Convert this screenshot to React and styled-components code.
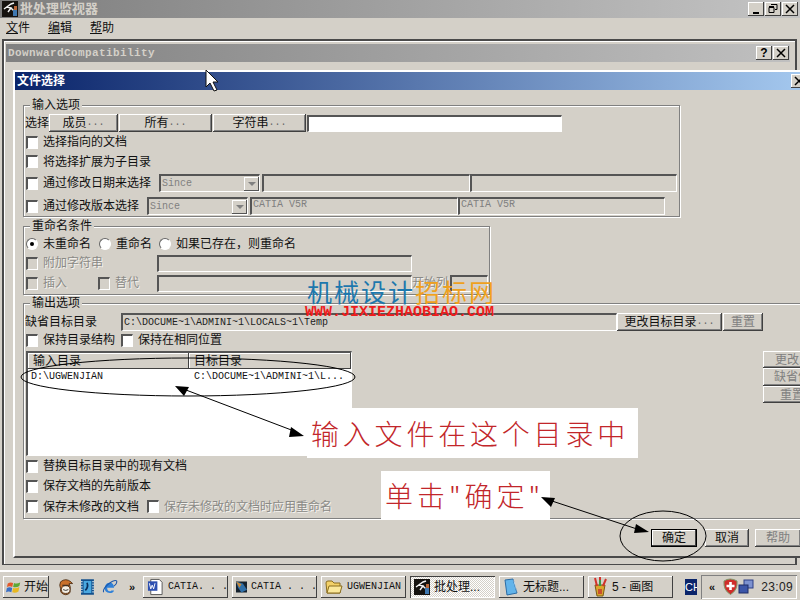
import styled, { createGlobalStyle } from "styled-components";

const face = "#d4d0c8";
const cjk = `"Liberation Sans", "Noto Sans CJK SC", sans-serif`;
const mono = `"Liberation Mono", "Noto Sans CJK SC", monospace`;

const GlobalStyle = createGlobalStyle`
  html, body {
    margin: 0;
    overflow: hidden;
    background: ${face};
  }
  * {
    box-sizing: border-box;
  }
`;

const Screen = styled.div`
  position: relative;
  display: flex;
  flex-direction: column;
  width: 800px;
  height: 600px;
  overflow: hidden;
  background: ${face};
  color: #111;
  font: 12px/14px ${cjk};
`;

const MainTitle = styled.div`
  display: flex;
  align-items: center;
  flex: none;
  height: 18px;
  padding: 0 2px 0 2px;
  background: linear-gradient(90deg, #7e7e7e, #c4c4c4);
`;

const MainTitleText = styled.span`
  margin-left: 2px;
  color: ${face};
  font-size: 13px;
  font-weight: 700;
  flex: 1;
`;

const WinButton = styled.div`
  display: flex;
  align-items: center;
  justify-content: center;
  flex: none;
  width: 16px;
  height: 14px;
  margin-left: 1px;
  background: ${face};
  box-shadow: inset -1px -1px #404040, inset 1px 1px #fff;
  color: #000;
  font: 700 12px/14px "Liberation Sans", sans-serif;
  letter-spacing: 0;
`;

const MenuBar = styled.div`
  display: flex;
  flex: none;
  height: 20px;
  padding: 3px 0 0 6px;
`;

const MenuItem = styled.div`
  width: 42px;
  u {
    text-underline-offset: 1px;
  }
`;

const InnerWindow = styled.div`
  flex: none;
  width: 795px;
  height: 526px;
  margin: 1px 0 0 2px;
  padding: 3px 0 0 2px;
  border: 2px solid #4a4a4a;
  border-bottom-width: 1px;
  box-shadow: inset 1px 1px #fff;
`;

const InnerTitle = styled.div`
  display: flex;
  align-items: center;
  width: 784px;
  height: 18px;
  padding: 0 1px 0 2px;
  background: linear-gradient(90deg, #808080, #c0c0c0);
  color: ${face};
  font: 700 11px/14px ${mono};
  letter-spacing: 0.4px;
`;

const InnerTitleText = styled.span`
  flex: 1;
`;

const Dialog = styled.div`
  width: 800px;
  height: 488px;
  margin: 8px 0 0 7px;
  border: 2px solid #fff;
  border-right: 0;
  border-bottom: 2px solid #4a4a4a;
  background: ${face};
`;

const DialogTitle = styled.div`
  display: flex;
  align-items: center;
  justify-content: space-between;
  height: 18px;
  padding: 0 6px 0 2px;
  background: linear-gradient(90deg, #0a246a, #a6caf0);
  color: #fff;
  font-size: 12px;
  font-weight: 700;
`;

const DialogBody = styled.div`
  padding: 15px 0 0 8px;
`;

const Group = styled.div`
  position: relative;
  width: ${(p) => p.$w}px;
  height: ${(p) => p.$h}px;
  margin-bottom: ${(p) => p.$mb || 0}px;
  padding: ${(p) => p.$pt}px 0 0 2px;
  border: 1px solid #808080;
  box-shadow: 1px 1px #fff, inset 1px 1px #fff;
`;

const Legend = styled.div`
  position: absolute;
  top: -8px;
  left: ${(p) => p.$left}px;
  padding: 0 2px;
  background: ${face};
`;

const Row = styled.div`
  display: flex;
  align-items: center;
  height: ${(p) => p.$h}px;
`;

const Label = styled.span`
  flex: none;
  width: ${(p) => (p.$w ? `${p.$w}px` : "auto")};
  margin-left: ${(p) => p.$ml || 0}px;
  white-space: nowrap;
  color: ${(p) => (p.$off ? "#8a8a86" : "#111")};
  text-shadow: ${(p) => (p.$off ? "1px 1px #f4f2ee" : "none")};
`;

const Box = styled.span`
  flex: none;
  width: 12px;
  height: 13px;
  margin: ${(p) => p.$m || "0 5px 0 0"};
  border-style: solid;
  border-width: 2px 1px 1px 2px;
  border-color: #555 #fff #fff #555;
  background: ${(p) => (p.$off ? face : "#fff")};
`;

const Radio = styled.span`
  flex: none;
  display: flex;
  align-items: center;
  justify-content: center;
  width: 12px;
  height: 12px;
  margin-right: 5px;
  border-radius: 50%;
  border: 1px solid;
  border-color: #666 #fff #fff #666;
  background: #fff;
  &::after {
    content: "";
    display: ${(p) => (p.$on ? "block" : "none")};
    width: 4px;
    height: 4px;
    border-radius: 50%;
    background: #000;
  }
`;

const Field = styled.div`
  flex: none;
  display: flex;
  align-items: center;
  justify-content: space-between;
  width: ${(p) => p.$w}px;
  height: ${(p) => p.$h || 18}px;
  margin-left: ${(p) => p.$ml || 0}px;
  padding: 0 0 ${(p) => p.$raise || 0}px 1px;
  border-style: solid;
  border-width: 2px 1px 1px 2px;
  border-color: #555 #fff #fff #555;
  background: ${(p) => (p.$white ? "#fff" : face)};
  color: ${(p) => (p.$dark ? "#222" : "#808080")};
  font: 10px/12px ${mono};
  white-space: nowrap;
  overflow: hidden;
`;

const ComboArrow = styled.span`
  display: flex;
  align-items: center;
  justify-content: center;
  width: 15px;
  height: 14px;
  background: ${face};
  box-shadow: inset -1px -1px #555, inset 1px 1px #fff;
  &::after {
    content: "";
    border: 4px solid transparent;
    border-top: 4px solid #808080;
    border-bottom: 0;
  }
`;

const Button = styled.div`
  flex: none;
  display: flex;
  align-items: center;
  justify-content: center;
  width: ${(p) => p.$w}px;
  height: ${(p) => p.$h || 18}px;
  margin-left: ${(p) => p.$ml || 0}px;
  background: ${face};
  box-shadow: inset -1px -1px #404040, inset 1px 1px #fff, inset -2px -2px #808080;
  color: ${(p) => (p.$off ? "#808080" : "#111")};
  white-space: nowrap;
  overflow: hidden;
  ${(p) => p.$focus && "outline: 1px solid #000; outline-offset: -1px; box-shadow: inset -2px -2px #404040, inset 2px 2px #fff;"}
`;

const Dots = styled.span`
  color: #666;
  font: 10px/12px ${mono};
`;

const TableRow = styled.div`
  display: flex;
  margin-top: 2px;
  height: 105px;
`;

const Table = styled.div`
  flex: none;
  width: 326px;
  height: 105px;
  border-style: solid;
  border-width: 2px 1px 1px 2px;
  border-color: #555 #fff #fff #555;
  background: #fff;
  font: 10px/12px ${mono};
`;

const TableHead = styled.div`
  display: flex;
  height: 16px;
  font: 12px/16px ${cjk};
`;

const HeadCell = styled.div`
  width: ${(p) => p.$w}px;
  padding-left: 5px;
  background: ${face};
  box-shadow: inset -1px -1px #404040, inset 1px 1px #fff;
`;

const TableLine = styled.div`
  display: flex;
  padding-top: 2px;
  height: 16px;
`;

const TableCell = styled.div`
  width: ${(p) => p.$w}px;
  padding-left: 3px;
  white-space: nowrap;
`;

const SideButtons = styled.div`
  display: flex;
  flex-direction: column;
  margin-left: 411px;
`;

const Footer = styled.div`
  display: flex;
  margin-top: 10px;
  padding-left: 628px;
`;

const TaskBar = styled.div`
  display: flex;
  align-items: center;
  flex: none;
  height: 31px;
  margin-top: 5px;
  padding-left: 3px;
  border-top: 2px solid #fff;
  background: ${face};
`;

const StartButton = styled.div`
  display: flex;
  align-items: center;
  gap: 2px;
  flex: none;
  width: 46px;
  height: 22px;
  padding-left: 3px;
  background: ${face};
  box-shadow: inset -1px -1px #404040, inset 1px 1px #fff;
  font-size: 12px;
`;

const QuickLaunch = styled.div`
  display: flex;
  align-items: center;
  flex: none;
  width: 94px;
  padding-left: 9px;
  gap: 8px;
`;

const Chevrons = styled.span`
  margin: 0 8px 0 3px;
  font: 700 11px/14px "Liberation Sans", sans-serif;
`;

const TaskList = styled.div`
  display: flex;
  gap: 4px;
  flex: none;
`;

const Task = styled.div`
  display: flex;
  align-items: center;
  gap: 4px;
  flex: none;
  width: 85px;
  height: 22px;
  padding-left: 4px;
  white-space: nowrap;
  overflow: hidden;
  font: 12px/14px ${cjk};
  background: ${(p) =>
    p.$pressed
      ? `repeating-conic-gradient(#fff 0 25%, ${face} 0 50%) 0 0 / 2px 2px`
      : face};
  box-shadow: ${(p) =>
    p.$pressed
      ? "inset 1px 1px #404040, inset -1px -1px #fff"
      : "inset -1px -1px #404040, inset 1px 1px #fff"};
`;

const TaskMono = styled.span`
  font: 10px/12px ${mono};
`;

const LangBox = styled.div`
  flex: none;
  width: 12px;
  height: 16px;
  margin-left: 12px;
  overflow: hidden;
  background: #0a246a;
  color: #fff;
  font: 11px/16px "Liberation Sans", sans-serif;
`;

const Tray = styled.div`
  display: flex;
  align-items: center;
  flex: none;
  width: 96px;
  height: 24px;
  margin-left: 4px;
  padding-left: 5px;
  box-shadow: inset 1px 1px #808080, inset -1px -1px #fff;
`;

const Clock = styled.span`
  margin-left: 7px;
  color: #222;
  letter-spacing: 0.4px;
`;

const Overlay = styled.svg`
  position: absolute;
  left: 0;
  top: 0;
  z-index: 5;
  pointer-events: none;
`;

const Watermark = styled.div`
  position: absolute;
  left: 307px;
  top: 276px;
  z-index: 3;
  font: 400 25px/30px "Noto Sans CJK SC", sans-serif;
  letter-spacing: 2px;
  white-space: nowrap;
  color: #1d78ad;
  span {
    color: #efa11e;
  }
`;

const WatermarkUrl = styled.div`
  position: absolute;
  left: 305px;
  top: 304px;
  z-index: 3;
  color: #ee1c1c;
  font: 700 15px/17px ${mono};
`;

const Note = styled.div`
  position: absolute;
  left: ${(p) => p.$x}px;
  top: ${(p) => p.$y}px;
  z-index: 4;
  width: ${(p) => p.$w}px;
  height: ${(p) => p.$h}px;
  padding-left: 4px;
  background: #fff;
  color: #c2262a;
  font: 300 28px/${(p) => p.$h}px "Noto Sans CJK SC", sans-serif;
  letter-spacing: ${(p) => p.$ls}px;
  white-space: nowrap;
`;

const AppIcon = ({ size = 16 }) => (
  <svg width={size} height={size} viewBox="0 0 16 16">
    <rect width="16" height="16" fill="#15120f" />
    <path d="M2 8 L9 3 L12 2 M5 6 L9 7 L6 11 M9 7 L13 11" stroke="#f4f4f4" strokeWidth="1.4" fill="none" />
    <path d="M11 9 h4 v6 h-4z" fill="#3f78b0" />
    <path d="M12 5 h3 v4 h-3z" fill="#b8673a" />
  </svg>
);

const FlagIcon = () => (
  <svg width="16" height="16" viewBox="0 0 18 16">
    <path d="M2 4 Q5 2 8 3.5 L7 8 Q4 6.5 1 8z" fill="#e2582a" />
    <path d="M9 3.5 Q12 5 16 3 L15 7 Q12 9 8 8z" fill="#5ea834" />
    <path d="M1 9 Q4 7.5 7 9 L6 14 Q3 12 0 14z" fill="#3a6fc4" />
    <path d="M8 9 Q11 10 15 8 L14 13 Q11 15 7 14z" fill="#e8b820" />
  </svg>
);

const PenguinIcon = () => (
  <svg width="18" height="20" viewBox="0 0 18 20">
    <path d="M3 4 Q9 -1 15 4 L17 6 L13 6 Q15 10 14 14 Q15 18 9 19 Q2 18 3 12 Q1 8 3 4z" fill="#c9702a" stroke="#4a2b10" />
    <ellipse cx="9" cy="13" rx="5" ry="4.5" fill="#f5efe4" stroke="#4a2b10" />
    <path d="M5 8 h8 M6 13 q3 2 6 0" stroke="#222" fill="none" />
  </svg>
);

const FilmIcon = () => (
  <svg width="15" height="18" viewBox="0 0 15 18">
    <rect width="15" height="18" fill="#12508c" />
    <rect x="3" y="2" width="9" height="14" fill="#4aa8e0" />
    <path d="M1 2v14M14 2v14" stroke="#e8f4fc" strokeDasharray="1.5 1.5" strokeWidth="1.5" />
    <path d="M5 13 Q9 9 7 4" stroke="#0a2f5c" strokeWidth="2" fill="none" />
  </svg>
);

const IeIcon = () => (
  <svg width="18" height="18" viewBox="0 0 18 18">
    <path d="M4 10 h10 Q14 4 9 4 Q4 4 3 10 Q3 16 9 16 Q13 16 14 13 h-3 Q10 14 9 14 Q6 14 6 10z" fill="#2f80d8" />
    <path d="M2 15 Q0 12 8 5 Q15 0 17 2 Q18 5 14 8" stroke="#1a54a8" strokeWidth="1.2" fill="none" />
  </svg>
);

const WordIcon = () => (
  <svg width="18" height="18" viewBox="0 0 18 18">
    <path d="M4 1 h9 l3 3 v13 h-12z" fill="#fff" stroke="#555" />
    <rect x="1" y="3" width="10" height="10" fill="#2d4fb0" />
    <path d="M2.5 5 l1.5 6 1.5-4 1.5 4 1.5-6" stroke="#fff" fill="none" />
  </svg>
);

const CatiaIcon = () => (
  <svg width="16" height="16" viewBox="0 0 16 16">
    <rect width="16" height="16" fill="#16222e" />
    <path d="M0 0 L10 3 L16 12 L8 16 L3 9z" fill="#2f6fa8" />
    <path d="M0 0 L8 4 L5 9z" fill="#c98a3a" />
  </svg>
);

const FolderIcon = () => (
  <svg width="18" height="16" viewBox="0 0 18 16">
    <path d="M1 4 Q1 2 3 2 H7 L9 4 H15 V14 H2z" fill="#f3d168" stroke="#8a6d1f" />
    <path d="M2 14 L4 7 H17 L15 14z" fill="#fbe89a" stroke="#8a6d1f" />
  </svg>
);

const NoteIcon = () => (
  <svg width="16" height="18" viewBox="0 0 16 18">
    <path d="M2 2 L10 1 L14 15 L4 17z" fill="#63b4ea" stroke="#2b6ca5" />
    <path d="M10 1 L14 15 L12 5z" fill="#cfe7f8" />
  </svg>
);

const PaintIcon = () => (
  <svg width="16" height="20" viewBox="0 0 16 20">
    <path d="M3 8 h10 l-2 11 h-6z" fill="#d9a62c" stroke="#7a5a14" />
    <path d="M5 9 L3 1 M8 9 V0 M11 9 L14 2" stroke="#d0342c" strokeWidth="2" />
    <path d="M8 9 V3" stroke="#3c9a44" strokeWidth="2" />
    <path d="M6 12 h4 v5 h-4z" fill="#c9502c" />
  </svg>
);

const ShieldIcon = () => (
  <svg width="15" height="17" viewBox="0 0 15 17">
    <path d="M1 3 Q7 -1 14 3 Q15 12 7.5 16.5 Q0 12 1 3z" fill="#cf2d2a" stroke="#7d9a6a" />
    <path d="M7.5 4 v8 M3.5 8 h8" stroke="#fff" strokeWidth="2.6" />
  </svg>
);

const NetworkIcon = () => (
  <svg width="16" height="16" viewBox="0 0 16 16">
    <rect x="6" y="1" width="9" height="8" fill="#7d92d0" stroke="#2c3f86" />
    <rect x="1" y="6" width="9" height="8" fill="#3c56a8" stroke="#1e2c66" />
  </svg>
);

const CrossIcon = () => (
  <svg width="10" height="10" stroke="#000" strokeWidth="1.5">
    <path d="M1 1l8 8M9 1l-8 8" />
  </svg>
);

const CheckItem = ({ text, off, m }) => (
  <>
    <Box $off={off} $m={m} />
    <Label $off={off}>{text}</Label>
  </>
);

export default function App() {
  return (
    <Screen>
      <GlobalStyle />
      <MainTitle>
        <AppIcon />
        <MainTitleText>批处理监视器</MainTitleText>
        <WinButton>
          <svg width="10" height="10"><path d="M2 8h6v2H2z" fill="#000" /></svg>
        </WinButton>
        <WinButton>
          <svg width="10" height="10" fill="none" stroke="#000"><path d="M3 .5h6v5h-2M1 3.5h5v5H1zM1 2.5h5" /></svg>
        </WinButton>
        <WinButton><CrossIcon /></WinButton>
      </MainTitle>
      <MenuBar>
        <MenuItem><u>文</u>件</MenuItem>
        <MenuItem><u>编</u>辑</MenuItem>
        <MenuItem><u>帮</u>助</MenuItem>
      </MenuBar>

      <InnerWindow>
        <InnerTitle>
          <InnerTitleText>DownwardCompatibility</InnerTitleText>
          <WinButton>?</WinButton>
          <WinButton><CrossIcon /></WinButton>
        </InnerTitle>

        <Dialog>
          <DialogTitle>
            文件选择
            <WinButton><CrossIcon /></WinButton>
          </DialogTitle>
          <DialogBody>
            <Group $w={657} $h={112} $pt={8} $mb={9}>
              <Legend $left={6}>输入选项</Legend>
              <Row $h={18}>
                <Label $w={24} $ml={-1}>选择</Label>
                <Button $w={69}>成员<Dots>...</Dots></Button>
                <Button $w={93} $ml={1}>所有<Dots>...</Dots></Button>
                <Button $w={93} $ml={1}>字符串<Dots>...</Dots></Button>
                <Field $w={255} $ml={1} $h={17} $white />
              </Row>
              <Row $h={20}><CheckItem text="选择指向的文档" /></Row>
              <Row $h={19}><CheckItem text="将选择扩展为子目录" /></Row>
              <Row $h={24}>
                <Box />
                <Label $w={116}>通过修改日期来选择</Label>
                <Field $w={101}>Since<ComboArrow /></Field>
                <Field $w={208} $ml={2} />
                <Field $w={207} />
              </Row>
              <Row $h={22}>
                <Box />
                <Label $w={104}>通过修改版本选择</Label>
                <Field $w={101}>Since<ComboArrow /></Field>
                <Field $w={208} $ml={2} $raise={3}>CATIA V5R</Field>
                <Field $w={207} $raise={3}>CATIA V5R</Field>
              </Row>
            </Group>

            <Group $w={467} $h={69} $pt={8} $mb={8}>
              <Legend $left={6}>重命名条件</Legend>
              <Row $h={18}>
                <Radio $on />
                <Label $w={56}>未重命名</Label>
                <Radio />
                <Label $w={43}>重命名</Label>
                <Radio />
                <Label>如果已存在，则重命名</Label>
              </Row>
              <Row $h={20}>
                <Box $off />
                <Label $w={114} $off>附加字符串</Label>
                <Field $w={255} $h={17} />
              </Row>
              <Row $h={20}>
                <Box $off />
                <Label $w={55} $off>插入</Label>
                <Box $off />
                <Label $w={42} $off>替代</Label>
                <Field $w={255} $h={17} />
                <Label $w={38} $off>开始列</Label>
                <Field $w={38} $h={17} />
              </Row>
            </Group>

            <Group $w={800} $h={216} $pt={9}>
              <Legend $left={6}>输出选项</Legend>
              <Row $h={18}>
                <Label $w={96} $ml={-1}>缺省目标目录</Label>
                <Field $w={496} $dark>C:\DOCUME~1\ADMINI~1\LOCALS~1\Temp</Field>
                <Button $w={105}>更改目标目录<Dots>...</Dots></Button>
                <Button $w={40} $ml={1} $off>重置</Button>
              </Row>
              <Row $h={18}>
                <Box />
                <Label $w={78}>保持目录结构</Label>
                <Box />
                <Label>保持在相同位置</Label>
              </Row>
              <TableRow>
                <Table>
                  <TableHead>
                    <HeadCell $w={161}>输入目录</HeadCell>
                    <HeadCell $w={162}>目标目录</HeadCell>
                  </TableHead>
                  <TableLine>
                    <TableCell $w={163}>D:\UGWENJIAN</TableCell>
                    <TableCell $w={160}>C:\DOCUME~1\ADMINI~1\L...</TableCell>
                  </TableLine>
                </Table>
                <SideButtons>
                  <Button $w={58} $h={17} $off>更改...</Button>
                  <Button $w={58} $h={18} $off>缺省值</Button>
                  <Button $w={58} $h={17} $off>重置</Button>
                </SideButtons>
              </TableRow>
              <Row $h={20}><CheckItem text="替换目标目录中的现有文档" /></Row>
              <Row $h={20}><CheckItem text="保存文档的先前版本" /></Row>
              <Row $h={21}>
                <Box />
                <Label $w={104}>保存未修改的文档</Label>
                <Box />
                <Label $off>保存未修改的文档时应用重命名</Label>
              </Row>
            </Group>

            <Footer>
              <Button $w={46} $focus>确定</Button>
              <Button $w={44} $ml={8}>取消</Button>
              <Button $w={46} $ml={6} $off>帮助</Button>
            </Footer>
          </DialogBody>
        </Dialog>
      </InnerWindow>

      <TaskBar>
        <StartButton><FlagIcon />开始</StartButton>
        <QuickLaunch>
          <PenguinIcon />
          <FilmIcon />
          <IeIcon />
          <Chevrons>»</Chevrons>
        </QuickLaunch>
        <TaskList>
          <Task><WordIcon /><TaskMono>CATIA. . .</TaskMono></Task>
          <Task><CatiaIcon /><TaskMono>CATIA . . .</TaskMono></Task>
          <Task><FolderIcon /><TaskMono>UGWENJIAN</TaskMono></Task>
          <Task $pressed><AppIcon />批处理...</Task>
          <Task><NoteIcon />无标题...</Task>
          <Task><PaintIcon />5 - 画图</Task>
        </TaskList>
        <LangBox>CH</LangBox>
        <Tray>
          <Chevrons>«</Chevrons>
          <ShieldIcon />
          <NetworkIcon />
          <Clock>23:09</Clock>
        </Tray>
      </TaskBar>

      <Watermark>机械设计<span>招标网</span></Watermark>
      <WatermarkUrl>WWW.JIXIEZHAOBIAO.COM</WatermarkUrl>
      <Note $x={307} $y={408} $w={331} $h={50} $ls={3.8}>输入文件在这个目录中</Note>
      <Note $x={381} $y={471} $w={169} $h={49} $ls={4}>单击"确定"</Note>

      <Overlay width="800" height="600" viewBox="0 0 800 600">
        <ellipse cx="188" cy="377" rx="167" ry="19" fill="none" stroke="#000" />
        <ellipse cx="663" cy="536" rx="43" ry="25" fill="none" stroke="#000" />
        <path d="M186 390 L294 431" stroke="#000" />
        <path d="M175 386 L189 387 L184 396z M304 436 L291 427 L289 437z" fill="#000" />
        <path d="M552 501 L640 530" stroke="#000" />
        <path d="M541 497 L555 498 L551 507z M649 532 L636 524 L634 533z" fill="#000" />
        <path d="M206 70 V87 L210 83 L214 91 L217 90 L213 82 L218 82z" fill="#fff" stroke="#111" />
      </Overlay>
    </Screen>
  );
}
